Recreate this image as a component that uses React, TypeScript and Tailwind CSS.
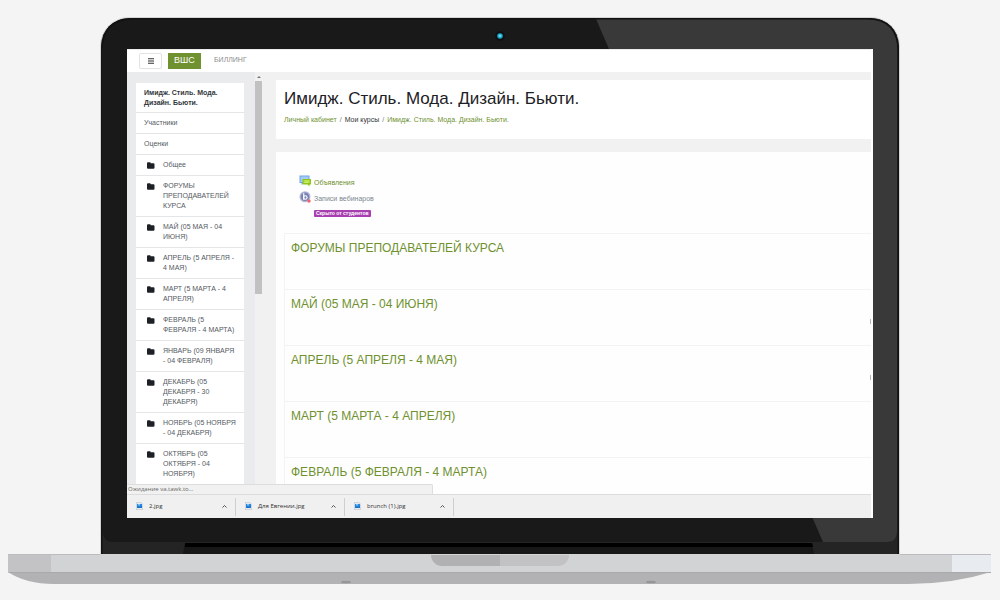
import React from "react";

type Section = { title: string; menu?: boolean };

const textLinks = ["Участники", "Оценки"];

const folders = [
  "Общее",
  "ФОРУМЫ ПРЕПОДАВАТЕЛЕЙ КУРСА",
  "МАЙ (05 МАЯ - 04 ИЮНЯ)",
  "АПРЕЛЬ (5 АПРЕЛЯ - 4 МАЯ)",
  "МАРТ (5 МАРТА - 4 АПРЕЛЯ)",
  "ФЕВРАЛЬ (5 ФЕВРАЛЯ - 4 МАРТА)",
  "ЯНВАРЬ (09 ЯНВАРЯ - 04 ФЕВРАЛЯ)",
  "ДЕКАБРЬ (05 ДЕКАБРЯ - 30 ДЕКАБРЯ)",
  "НОЯБРЬ (05 НОЯБРЯ - 04 ДЕКАБРЯ)",
  "ОКТЯБРЬ (05 ОКТЯБРЯ - 04 НОЯБРЯ)",
];

const sections: Section[] = [
  { title: "ФОРУМЫ ПРЕПОДАВАТЕЛЕЙ КУРСА" },
  { title: "МАЙ (05 МАЯ - 04 ИЮНЯ)", menu: true },
  { title: "АПРЕЛЬ (5 АПРЕЛЯ - 4 МАЯ)", menu: true },
  { title: "МАРТ (5 МАРТА - 4 АПРЕЛЯ)" },
  { title: "ФЕВРАЛЬ (5 ФЕВРАЛЯ - 4 МАРТА)" },
];

const downloads = ["2.jpg", "Для Евгении.jpg", "brunch (1).jpg"];

function FolderIcon() {
  return (
    <svg viewBox="0 0 16 14" className="mt-[2px] h-[7px] w-2 shrink-0" aria-hidden="true">
      <path d="M0 2.5Q0 .5 2 .5h3.500q2 0 2 2H13q2 0 2 2v7q0 2-2 2H2q-2 0-2-2z" fill="#1d2125" />
    </svg>
  );
}

function ForumIcon() {
  return (
    <svg viewBox="0 0 24 24" className="h-3 w-3 shrink-0" aria-hidden="true">
      <path d="M1 1h20v15H9l-4 4v-4H1z" fill="#6da6e8" />
      <path d="M3 3h16v11H3z" fill="#a5cbf5" />
      <path d="M7 8h17v11h-3v4l-4-4H7z" fill="#8fc61c" />
      <path d="M9 10h13v6H9z" fill="#a8dc24" />
      <path d="M11 12h9M11 15h8" stroke="#e9f8b4" strokeWidth="1.200" />
    </svg>
  );
}

function WebinarIcon() {
  return (
    <svg viewBox="0 0 24 24" className="h-3 w-3 shrink-0" aria-hidden="true">
      <circle cx="12" cy="11.500" r="11" fill="#b4b9d8" />
      <circle cx="12" cy="11.500" r="8.600" fill="#7883b3" />
      <path d="M9.500 5v11.500" stroke="#fff" strokeWidth="2.400" strokeLinecap="round" />
      <circle cx="12.600" cy="13" r="3.600" fill="none" stroke="#fff" strokeWidth="2.200" />
      <circle cx="20" cy="20" r="3.400" fill="#f4636a" />
    </svg>
  );
}

function ImageFileIcon() {
  return (
    <svg viewBox="0 0 14 16" className="mb-[2px] h-2 w-[7px] shrink-0" aria-hidden="true">
      <path d="M.5.5h9l4 4v11H.5z" fill="#e3eaf1" stroke="#a9b4c0" />
      <path d="M2 4h10v8H2z" fill="#2b88e0" />
      <path d="M2 10l3-2 3 2 4-3v5H2z" fill="#1b74cc" />
      <path d="M4 4h4v3H4z" fill="#7cc4f8" />
    </svg>
  );
}

function TopBar() {
  return (
    <header className="flex h-[23px] shrink-0 items-center border-t border-[#ececec] bg-white pl-3">
      <button
        type="button"
        aria-label="Меню"
        className="flex h-4 w-[23px] items-center justify-center rounded-[2px] border border-[#e2e2e2] bg-white"
      >
        <svg viewBox="0 0 12 12" className="h-[6px] w-[6px]" aria-hidden="true">
          <path d="M0 1.500h12M0 6h12M0 10.500h12" stroke="#333" strokeWidth="2.200" />
        </svg>
      </button>
      <a
        href="#home"
        className="ml-[6px] flex h-4 w-[33px] items-center justify-center bg-[#6f912f] text-[9px] text-white"
      >
        ВШС
      </a>
      <a href="#billing" className="ml-[13px] pb-[2px] text-[7px] leading-[10px] text-[#8c8c8c]">
        БИЛЛИНГ
      </a>
    </header>
  );
}

function Sidebar() {
  return (
    <div className="flex w-[149px] shrink-0 overflow-hidden">
      <nav className="flex-1 bg-[#e9ebed] pl-[9px] pr-[11px] pt-[11px] text-[7px] leading-[10px] text-[#555a5f]">
        <a
          href="#course"
          className="block border-b border-[#e4e5e6] bg-white pb-1 pl-2 pr-5 pt-[5px] font-bold text-[#33383d]"
        >
          Имидж. Стиль. Мода. Дизайн. Бьюти.
        </a>
        {textLinks.map((t) => (
          <a key={t} href="#info" className="block border-b border-[#e4e5e6] bg-white py-[5px] pl-2">
            {t}
          </a>
        ))}
        {folders.map((t) => (
          <a
            key={t}
            href="#section"
            className="flex gap-2 border-b border-[#e4e5e6] bg-white py-[5px] pl-[11px] pr-[7px]"
          >
            <FolderIcon />
            <span>{t}</span>
          </a>
        ))}
      </nav>
      <div className="flex w-[7px] flex-col items-center bg-[#f1f1f1] pt-1" aria-hidden="true">
        <svg viewBox="0 0 8 4" className="h-[2px] w-1">
          <path d="M0 4l4-4 4 4z" fill="#777" />
        </svg>
        <div className="mt-[3px] h-[51%] w-full bg-[#c1c1c1]" />
      </div>
      <div className="w-[14px] bg-[#f1f1f1]" />
    </div>
  );
}

function Main() {
  return (
    <main className="flex min-w-0 flex-1 flex-col overflow-hidden bg-[#f1f1f1] pt-2">
      <div className="shrink-0 bg-white pb-[14px] pl-2 pt-[9px]">
        <h1 className="text-[17px] leading-5 text-[#1d2125]">Имидж. Стиль. Мода. Дизайн. Бьюти.</h1>
        <nav className="mt-[6px] flex gap-[3px] text-[7px] leading-[10px] text-[#6f912f]">
          <a href="#dashboard">Личный кабинет</a>
          <span className="text-[#777]">/</span>
          <span className="text-[#333]">Мои курсы</span>
          <span className="text-[#777]">/</span>
          <a href="#course">Имидж. Стиль. Мода. Дизайн. Бьюти.</a>
        </nav>
      </div>
      <div className="mt-[13px] shrink-0 bg-[#fefefe] pl-2 pt-[23px]">
        <ul className="flex flex-col gap-[3px] pb-4 pl-[15px] text-[7px] leading-[10px]">
          <li className="flex gap-[3px]">
            <ForumIcon />
            <a href="#news" className="pt-[3px] text-[#6f912f]">
              Объявления
            </a>
          </li>
          <li className="flex gap-[3px]">
            <WebinarIcon />
            <div className="pt-[3px]">
              <a href="#webinars" className="block text-[#7b8790]">
                Записи вебинаров
              </a>
              <span className="mt-[6px] block w-fit rounded-[1px] bg-[#a83fb0] px-[2px] text-[5px] font-bold leading-[7px] text-white">
                Скрыто от студентов
              </span>
            </div>
          </li>
        </ul>
        {sections.map((s) => (
          <section
            key={s.title}
            className="flex h-14 items-start justify-between border-l border-t border-[#f3f3f3] pl-[6px] pt-[5px]"
          >
            <h2 className="text-[12px] leading-[18px] text-[#6f912f]">{s.title}</h2>
            {s.menu && <span className="mt-6 h-[5px] w-px bg-[#b5b5b5]" />}
          </section>
        ))}
      </div>
    </main>
  );
}

function DownloadBar() {
  return (
    <footer className="flex h-6 shrink-0 items-center border-t border-[#dcdcdc] bg-[#f0f0f0]">
      {downloads.map((name) => (
        <button
          key={name}
          type="button"
          className="flex h-[18px] w-[109px] items-center border-r border-[#cfcfcf] pl-[9px] pr-2 font-['Open_Sans','Noto_Sans',sans-serif] text-[6px] text-[#333]"
        >
          <ImageFileIcon />
          <span className="flex-1 pl-[6px] text-left">{name}</span>
          <svg viewBox="0 0 10 6" className="h-[3px] w-[5px]" aria-hidden="true">
            <path d="M1 5l4-4 4 4" fill="none" stroke="#444" strokeWidth="1.800" />
          </svg>
        </button>
      ))}
    </footer>
  );
}

function Screen() {
  return (
    <div className="relative flex min-h-0 flex-1 flex-col overflow-hidden bg-white pr-[2px]">
      <TopBar />
      <div className="relative flex min-h-0 flex-1 overflow-hidden">
        <Sidebar />
        <Main />
        <div className="absolute bottom-0 left-0 w-[306px] rounded-tr-[2px] border-r border-t border-[#dddddd] bg-[#f1f1f1] pl-px font-['Open_Sans','Noto_Sans',sans-serif] text-[6px] leading-[9px] text-[#666]">
          Ожидание va.tawk.to...
        </div>
      </div>
      <DownloadBar />
    </div>
  );
}

function LidShade() {
  return (
    <svg viewBox="0 0 798 536" preserveAspectRatio="none" className="absolute inset-0 h-full w-full" aria-hidden="true">
      <path d="M0 0H798V536H0z" fill="#242424" />
      <path d="M2 1H796V514q0 10-10 10H12q-10 0-10-10z" fill="#191919" />
      <path d="M495 1H796V514q0 10-10 10H722z" fill="#393939" />
      <path d="M84 525H711l2 11H82z" fill="#171717" />
      <path d="M84 525H711l1 4H84z" fill="#000" />
      <path d="M.75 536V34Q.75.75 32 .75H766Q797.250.75 797.250 34V536" fill="none" stroke="#111" strokeWidth="1.500" />
    </svg>
  );
}

function Base() {
  return (
    <div className="ml-2 mr-[9px] shrink-0" aria-hidden="true">
      <div className="flex h-[18px] border-t border-[#bcbcbe]">
        <div className="w-[43px] bg-[#c3c3c5]" />
        <div className="flex flex-1 justify-center bg-[#d2d3d5] pr-[3px]">
          <div className="flex h-[11px] w-[138px] overflow-hidden rounded-b-[11px]">
            <div className="flex-1 bg-[#b1b1b3]" />
            <div className="flex-1 bg-[#c2c2c4]" />
          </div>
        </div>
        <div className="w-[39px] bg-[#e8ebf0]" />
      </div>
      <svg viewBox="0 0 983 12" preserveAspectRatio="none" className="block h-3 w-full">
        <path d="M0 0H983Q945 12 900 12H46Q18 12 0 0z" fill="#b2b2b4" />
        <path d="M0 0H983v1H1z" fill="#a9a9ab" />
        <ellipse cx="338" cy="10" rx="5" ry="1.300" fill="#969698" />
        <ellipse cx="643" cy="10" rx="5" ry="1.300" fill="#969698" />
      </svg>
    </div>
  );
}

export default function App() {
  return (
    <div className="flex h-screen flex-col bg-[#f4f4f4] pb-4 pt-[18px] font-['Liberation_Sans',Arial,sans-serif]">
      <div className="relative mx-[101px] flex min-h-0 flex-1 flex-col overflow-hidden rounded-t-[28px] px-[26px] pb-[36px] shadow-[0_0_0_1px_#d4d4d4]">
        <LidShade />
        <div className="relative flex h-[31px] shrink-0 items-center justify-center pt-[4px]">
          <svg viewBox="0 0 10 10" className="h-[10px] w-[10px]" aria-hidden="true">
            <circle cx="5" cy="5" r="4.800" fill="#0c1214" />
            <circle cx="5" cy="5" r="2.800" fill="#1f9fc0" />
            <circle cx="5" cy="4.800" r="1.500" fill="#5bd9f2" />
          </svg>
        </div>
        <Screen />
      </div>
      <Base />
    </div>
  );
}
